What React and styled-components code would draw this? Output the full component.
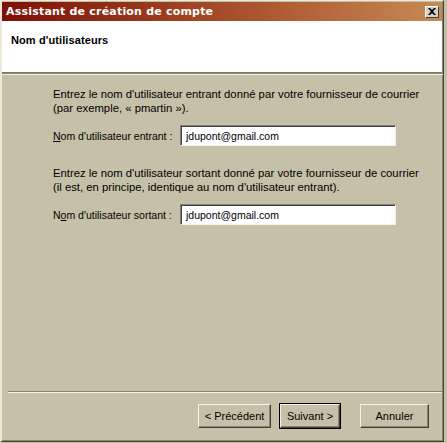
import React from "react";
import styled, { createGlobalStyle } from "styled-components";

const GlobalStyle = createGlobalStyle`
  html, body {
    margin: 0;
    padding: 0;
    background: #c5c1a8;
  }
  body {
    font-family: "Liberation Sans", sans-serif;
  }
`;

const Window = styled.div`
  width: 444px;
  height: 442px;
  box-sizing: border-box;
  display: flex;
  flex-direction: column;
  background: #c5c1a8;
  border-left: 2px solid #ece9d8;
  border-top: 1px solid #ece9d8;
  border-right: 1px solid #404040;
  border-bottom: 1px solid #404040;
  box-shadow: inset -1px -1px 0 #8a8672;
`;

const TitleBar = styled.div`
  height: 19px;
  margin: 1px 1px 0 0;
  display: flex;
  align-items: center;
  justify-content: space-between;
  padding: 0 3px 0 4px;
  background: linear-gradient(90deg, #7e1008 0%, #9a3a1c 35%, #b86a3e 75%, #c48a52 100%);
`;

const Title = styled.span`
  color: #ffffff;
  font-family: "DejaVu Sans", sans-serif;
  font-weight: bold;
  font-size: 11px;
  letter-spacing: 0.2px;
`;

const CloseButton = styled.div`
  width: 14px;
  height: 12px;
  box-sizing: border-box;
  background: #d4d0c0;
  border-top: 1px solid #fff;
  border-left: 1px solid #fff;
  border-right: 1px solid #404040;
  border-bottom: 1px solid #404040;
  display: flex;
  align-items: center;
  justify-content: center;
`;

const Header = styled.div`
  height: 52px;
  background: #ffffff;
  margin-right: 1px;
  padding: 13px 0 0 9px;
  box-sizing: border-box;
  border-bottom: 1px solid #7a7868;
`;

const HeaderTitle = styled.div`
  font-weight: bold;
  font-size: 11px;
  letter-spacing: 0.1px;
  color: #000;
`;

const Divider = styled.div`
  height: 0;
  border-top: 1px solid #8a8672;
  border-bottom: 1px solid #f4f2e8;
  margin: ${(p) => p.$margin || "0"};
`;

const Content = styled.div`
  flex: 1;
  padding: 12px 0 0 51px;
  display: flex;
  flex-direction: column;
`;

const Section = styled.div`
  display: flex;
  flex-direction: column;
  margin-bottom: ${(p) => p.$gap || "0"};
`;

const Para = styled.p`
  margin: 0 0 10px 0;
  font-size: 11.3px;
  line-height: 14px;
  color: #000;
`;

const Row = styled.div`
  display: flex;
  align-items: center;
`;

const Label = styled.label`
  width: 127px;
  font-size: 10.5px;
  color: #000;
  u {
    text-decoration: underline;
  }
`;

const Input = styled.div`
  width: 216px;
  height: 21px;
  box-sizing: border-box;
  background: #fff;
  border-top: 1px solid #808080;
  border-left: 1px solid #808080;
  border-right: 1px solid #f4f2e8;
  border-bottom: 1px solid #f4f2e8;
  box-shadow: inset 1px 1px 0 #404040;
  padding: 0 0 0 5px;
  display: flex;
  align-items: center;
  font-size: 10.5px;
  color: #000;
`;

const Footer = styled.div`
  height: 48px;
  display: flex;
  justify-content: flex-end;
  align-items: flex-start;
  padding: 11px 14px 0 0;
  box-sizing: border-box;
`;

const Button = styled.div`
  width: ${(p) => p.$w}px;
  height: 24px;
  margin-left: ${(p) => p.$ml || 0}px;
  box-sizing: border-box;
  background: #c5c1a8;
  border-top: 1px solid #f4f2e8;
  border-left: 1px solid #f4f2e8;
  border-right: 1px solid #404040;
  border-bottom: 1px solid #404040;
  box-shadow: inset -1px -1px 0 #8a8672;
  outline: ${(p) => (p.$default ? "1px solid #000" : "none")};
  display: flex;
  align-items: center;
  justify-content: center;
  font-size: 11px;
  color: #000;
`;

const CloseIcon = () => (
  <svg width="8" height="7" viewBox="0 0 8 7">
    <path d="M0 0h2l2 2 2-2h2L5 3.5 8 7H6L4 5 2 7H0l3-3.5z" fill="#000" />
  </svg>
);

export default function App() {
  return (
    <>
      <GlobalStyle />
      <Window>
        <TitleBar>
          <Title>Assistant de création de compte</Title>
          <CloseButton>
            <CloseIcon />
          </CloseButton>
        </TitleBar>
        <Header>
          <HeaderTitle>Nom d'utilisateurs</HeaderTitle>
        </Header>
        <Divider />
        <Content>
          <Section $gap="20px">
            <Para>
              Entrez le nom d'utilisateur entrant donné par votre fournisseur de courrier
              <br />
              (par exemple, « pmartin »).
            </Para>
            <Row>
              <Label>
                <u>N</u>om d'utilisateur entrant :
              </Label>
              <Input>jdupont@gmail.com</Input>
            </Row>
          </Section>
          <Section>
            <Para>
              Entrez le nom d'utilisateur sortant donné par votre fournisseur de courrier
              <br />
              (il est, en principe, identique au nom d'utilisateur entrant).
            </Para>
            <Row>
              <Label>
                N<u>o</u>m d'utilisateur sortant :
              </Label>
              <Input>jdupont@gmail.com</Input>
            </Row>
          </Section>
        </Content>
        <Divider $margin="0 1px 0 6px" />
        <Footer>
          <Button $w={73}>&lt; Précédent</Button>
          <Button $w={60} $ml={9} $default>
            Suivant &gt;
          </Button>
          <Button $w={69} $ml={20}>
            Annuler
          </Button>
        </Footer>
      </Window>
    </>
  );
}
